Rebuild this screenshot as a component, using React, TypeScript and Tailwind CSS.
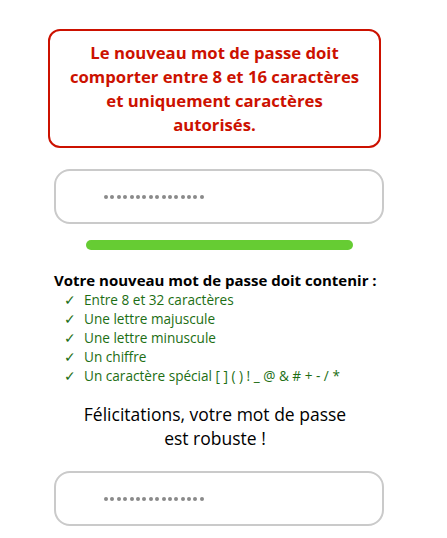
const rules = [
  "Entre 8 et 32 caractères",
  "Une lettre majuscule",
  "Une lettre minuscule",
  "Un chiffre",
  "Un caractère spécial [ ] ( ) ! _ @ & # + - / *",
];

// Masked password: 16 grey bullets
function MaskedInput() {
  return (
    <div className="ml-[54px] w-[330px] h-[55px] rounded-[16px] border-2 border-[#cacaca] bg-white flex items-center pl-[48px]">
      <div className="flex justify-between w-[100px]">
        {Array.from({ length: 16 }).map((_, i) => (
          <span key={i} className="block w-[4px] h-[4px] rounded-full bg-[#8a8a8a]" />
        ))}
      </div>
    </div>
  );
}

export default function App() {
  return (
    <div className="w-[447px] h-[538px] bg-white font-['Open_Sans',sans-serif] overflow-hidden pt-[29px]">
      {/* Error message */}
      <div className="ml-[48px] w-[333px] h-[119px] rounded-[12px] border-2 border-[#cc1100] flex items-center justify-center px-2">
        <p className="text-center font-bold text-[16.7px] leading-[24px] text-[#cc1100]">
          Le nouveau mot de passe doit
          <br />
          comporter entre 8 et 16 caractères
          <br />
          et uniquement caractères
          <br />
          autorisés.
        </p>
      </div>

      <div className="mt-[21px]">
        <MaskedInput />
      </div>

      {/* Strength bar */}
      <div className="ml-[86px] mt-[16px] w-[267px] h-[10px] rounded-full bg-[#66cc33]" />

      <div className="ml-[54px] mt-[20px]">
        <h3 className="font-bold text-[15px] leading-[20px] text-black">
          Votre nouveau mot de passe doit contenir :
        </h3>
        <ul className="ml-[10px]">
          {rules.map((r) => (
            <li key={r} className="flex text-[13.6px] leading-[19px] text-[#1d6e14]">
              <span className="w-[20px]">✓</span>
              <span>{r}</span>
            </li>
          ))}
        </ul>
      </div>

      <p className="mt-[17px] w-[430px] text-center text-[17.5px] leading-[24px] text-black">
        Félicitations, votre mot de passe
        <br />
        est robuste !
      </p>

      <div className="mt-[21px]">
        <MaskedInput />
      </div>
    </div>
  );
}
